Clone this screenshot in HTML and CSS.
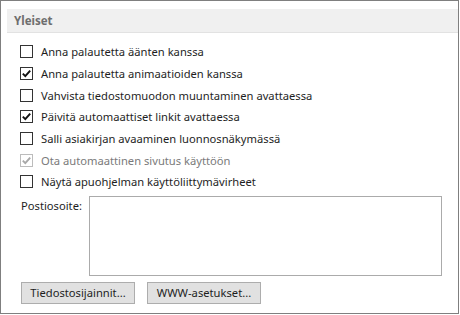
FILE: index.html
```html
<!DOCTYPE html>
<html lang="fi">
<head>
  <meta charset="UTF-8">
  <title>Yleiset</title>
  <link rel="stylesheet" href="styles.css">
</head>
<body>
  <div class="panel">
    <div class="section-title">Yleiset</div>

    <div class="options">
      <label class="option">
        <span class="box"></span>
        <span class="option-text">Anna palautetta äänten kanssa</span>
      </label>
      <label class="option">
        <span class="box checked">
          <svg viewBox="0 0 13 13" width="13" height="13"><path d="M2.8 6.6 L5.3 9.2 L10.2 3.6" /></svg>
        </span>
        <span class="option-text">Anna palautetta animaatioiden kanssa</span>
      </label>
      <label class="option">
        <span class="box"></span>
        <span class="option-text">Vahvista tiedostomuodon muuntaminen avattaessa</span>
      </label>
      <label class="option">
        <span class="box checked">
          <svg viewBox="0 0 13 13" width="13" height="13"><path d="M2.8 6.6 L5.3 9.2 L10.2 3.6" /></svg>
        </span>
        <span class="option-text">Päivitä automaattiset linkit avattaessa</span>
      </label>
      <label class="option">
        <span class="box"></span>
        <span class="option-text">Salli asiakirjan avaaminen luonnosnäkymässä</span>
      </label>
      <label class="option disabled">
        <span class="box checked">
          <svg viewBox="0 0 13 13" width="13" height="13"><path d="M2.8 6.6 L5.3 9.2 L10.2 3.6" /></svg>
        </span>
        <span class="option-text">Ota automaattinen sivutus käyttöön</span>
      </label>
      <label class="option">
        <span class="box"></span>
        <span class="option-text">Näytä apuohjelman käyttöliittymävirheet</span>
      </label>
    </div>

    <div class="address-row">
      <span class="address-label">Postiosoite:</span>
      <div class="address-box"></div>
    </div>

    <div class="buttons">
      <button class="btn">Tiedostosijainnit...</button>
      <button class="btn">WWW-asetukset...</button>
    </div>
  </div>
</body>
</html>
```

FILE: styles.css
```css
* {
  margin: 0;
  padding: 0;
  box-sizing: border-box;
}

body {
  background: #ffffff;
  font-family: "Noto Sans", "Open Sans", sans-serif;
  font-size: 11.2px;
  line-height: 15px;
  color: #1e1e1e;
}

.panel {
  width: 459px;
  height: 314px;
  border: 1px solid #7f7f7f;
  padding-top: 8px;
  padding-left: 6px;
}

.section-title {
  height: 24px;
  line-height: 23px;
  background: #f0f0f0;
  border-bottom: 1px solid #e2e2e2;
  padding-left: 7px;
  font-size: 11.5px;
  font-weight: 700;
  color: #6e6e6e;
}

.options {
  display: flex;
  flex-direction: column;
  margin-top: 8px;
  padding-left: 13px;
}

.option {
  display: flex;
  align-items: center;
  height: 21.7px;
  gap: 8px;
}

.box {
  width: 13px;
  height: 13px;
  border: 1px solid #333333;
  background: #ffffff;
  position: relative;
  flex: none;
}

.box svg {
  position: absolute;
  left: -1px;
  top: -1px;
}

.box svg path {
  fill: none;
  stroke: #111111;
  stroke-width: 1.9;
}

.option.disabled .box {
  border-color: #bcbcbc;
}

.option.disabled .box svg path {
  stroke: #a8a8a8;
}

.option.disabled .option-text {
  color: #7a7a7a;
}

.address-row {
  display: flex;
  margin-top: 3px;
  padding-left: 14px;
}

.address-label {
  width: 68px;
  flex: none;
  padding-top: 2px;
}

.address-box {
  width: 353px;
  height: 80px;
  border: 1px solid #ababab;
  background: #ffffff;
}

.buttons {
  display: flex;
  gap: 12px;
  margin-top: 6px;
  padding-left: 14px;
}

.btn {
  width: 114px;
  height: 22px;
  background: #e1e1e1;
  border: 1px solid #adadad;
  font-family: inherit;
  font-size: 11.2px;
  color: #1e1e1e;
}
```
